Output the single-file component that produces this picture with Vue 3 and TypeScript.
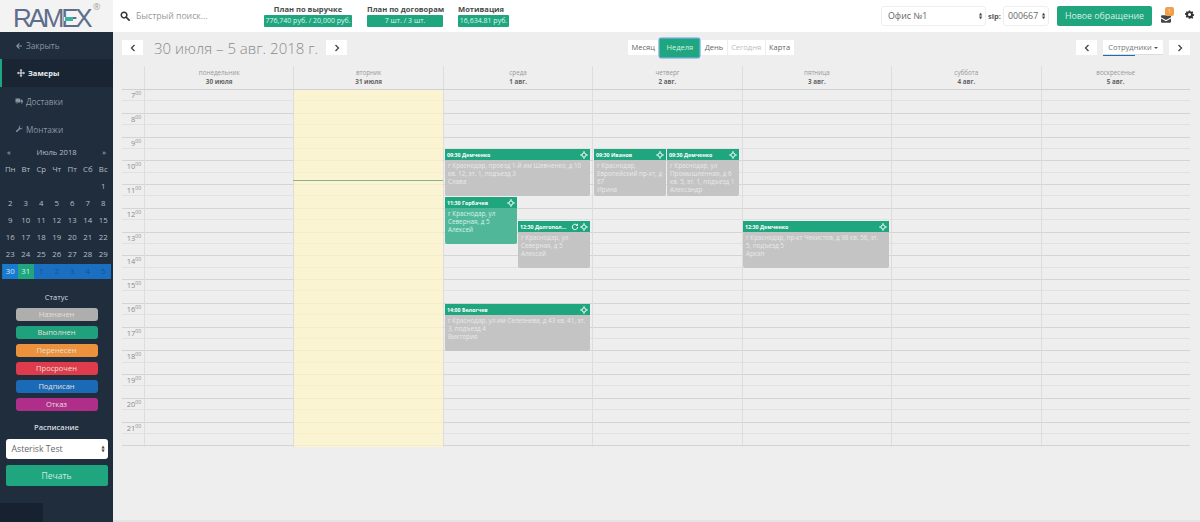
<script setup lang="ts">
interface CalEvent { time: string; name: string; text: string[]; left: number; top: number; width: number; height: number; done?: boolean; refresh?: boolean }
const nav = [
  { label: 'Закрыть', icon: 'back' },
  { label: 'Замеры', icon: 'move', active: true },
  { label: 'Доставки', icon: 'truck' },
  { label: 'Монтажи', icon: 'wrench' },
]
const weekdays = ['Пн', 'Вт', 'Ср', 'Чт', 'Пт', 'Сб', 'Вс']
const weeks: (string | number)[][] = [
  ['', '', '', '', '', '', 1],
  [2, 3, 4, 5, 6, 7, 8],
  [9, 10, 11, 12, 13, 14, 15],
  [16, 17, 18, 19, 20, 21, 22],
  [23, 24, 25, 26, 27, 28, 29],
]
const lastWeek = [30, 31, 1, 2, 3, 4, 5]
const statuses = [
  { label: 'Назначен', color: '#b4b4b4' },
  { label: 'Выполнен', color: '#1fa67f' },
  { label: 'Перенесен', color: '#f5973c' },
  { label: 'Просрочен', color: '#e63c4e' },
  { label: 'Подписан', color: '#1a6dbd' },
  { label: 'Отказ', color: '#b42f8e' },
]
const plans = [
  { title: 'План по выручке', value: '776,740 руб. / 20,000 руб.', width: 88 },
  { title: 'План по договорам', value: '7 шт. / 3 шт.', width: 76 },
  { title: 'Мотивация', value: '16,634.81 руб.', width: 51 },
]
const views = ['Месяц', 'Неделя', 'День', 'Сегодня', 'Карта']
const days = [
  ['понедельник', '30 июля'], ['вторник', '31 июля'], ['среда', '1 авг.'], ['четверг', '2 авг.'],
  ['пятница', '3 авг.'], ['суббота', '4 авг.'], ['воскресенье', '5 авг.'],
]
const hours = Array.from({ length: 15 }, (_, i) => i + 7)
const events: CalEvent[] = [
  { time: '09:30', name: 'Демченко', text: ['г Краснодар, проезд 1-й им Шевченко, д 10', 'кв. 12, эт. 1, подъезд 3', 'Слава'], left: 323, top: 59, width: 145, height: 47 },
  { time: '09:30', name: 'Иванов', text: ['г Краснодар,', 'Европейский пр-кт, д', '67', 'Ирина'], left: 472, top: 59, width: 72, height: 47 },
  { time: '09:30', name: 'Демченко', text: ['г Краснодар, ул', 'Промышленная, д 6', 'кв. 5, эт. 1, подъезд 1', 'Александр'], left: 545, top: 59, width: 72, height: 47 },
  { time: '11:30', name: 'Горбачев', text: ['г Краснодар, ул', 'Северная, д 5', 'Алексей'], left: 323, top: 107, width: 72, height: 47, done: true },
  { time: '12:30', name: 'Долгопол...', text: ['г Краснодар, ул', 'Северная, д 5', 'Алексей'], left: 396, top: 131, width: 72, height: 47, refresh: true },
  { time: '12:30', name: 'Демченко', text: ['г Краснодар, пр-кт Чекистов, д 98 кв. 56, эт.', '5, подъезд 5', 'Аркап'], left: 621, top: 131, width: 146, height: 47 },
  { time: '14:00', name: 'Белогчев', text: ['г Краснодар, ул им Селезнева, д 43 кв. 41, эт.', '3, подъезд 4', 'Виктория'], left: 323, top: 214, width: 145, height: 47 },
]
function place(e: CalEvent) {
  return { left: e.left + 'px', top: e.top + 'px', width: e.width + 'px', height: e.height + 'px' }
}
</script>

<template>
  <div class="page">
    <header class="top">
      <div class="logo">
        <span class="logo-word">RAMEX<i class="logo-dash"></i></span>
        <span class="logo-reg">®</span>
      </div>
      <div class="bar">
        <svg class="search" viewBox="0 0 16 16"><circle cx="6.5" cy="6.5" r="4.5" fill="none" stroke="#333" stroke-width="2.4"/><path d="M10 10l4.5 4.5" stroke="#333" stroke-width="2.8" stroke-linecap="round"/></svg>
        <span class="search-text">Быстрый поиск...</span>
        <div class="plans">
          <div v-for="p in plans" :key="p.title" class="plan" :style="{ width: p.width + 'px' }">
            <div class="plan-title">{{ p.title }}</div>
            <div class="plan-value">{{ p.value }}</div>
          </div>
        </div>
        <div class="bar-right">
          <div class="select office">Офис №1<span class="updown"><b>▲</b><b>▼</b></span></div>
          <span class="sip">sip:</span>
          <div class="select sipbox">000667<span class="updown"><b>▲</b><b>▼</b></span></div>
          <button class="new">Новое обращение</button>
          <div class="mail">
            <svg viewBox="0 0 16 12" width="10" height="8"><path d="M0 3l8 4.500L16 3V1.500A1.500 1.500 0 0 0 14.500 0h-13A1.500 1.500 0 0 0 0 1.500zM0 5v5.500A1.500 1.500 0 0 0 1.500 12h13a1.500 1.500 0 0 0 1.500-1.500V5l-8 4.500z" fill="#444"/></svg>
            <span class="mail-badge">1</span>
          </div>
          <svg class="gear" viewBox="0 0 24 24"><path fill="#333" fill-rule="evenodd" d="M10 1h4l.6 3.100 2 .8L19.300 3.200l2.800 2.800-1.700 2.600.9 2 3 .6v4l-3 .6-.9 2 1.700 2.600-2.800 2.800-2.700-1.700-2 .8L14 23h-4l-.6-3.100-2-.8-2.700 1.700-2.800-2.800 1.700-2.600-.9-2-3-.6v-4l3-.6.9-2L1.900 6l2.800-2.800 2.700 1.700 2-.8zM12 8a4 4 0 1 0 0 8 4 4 0 0 0 0-8z"/></svg>
        </div>
      </div>
    </header>

    <div class="body">
      <aside class="side">
        <nav class="nav">
          <div v-for="n in nav" :key="n.label" class="nav-item" :class="{ active: n.active }">
            <svg class="nav-icon" viewBox="0 0 16 16">
              <path v-if="n.icon === 'back'" d="M8 2L2 8l6 6 1.500-1.500L6.200 9.200H14V6.800H6.200l3.300-3.300z"/>
              <path v-else-if="n.icon === 'move'" d="M8 0l3 3H9v4h4V5l3 3-3 3V9H9v4h2l-3 3-3-3h2V9H3v2L0 8l3-3v2h4V3H5z"/>
              <path v-else-if="n.icon === 'truck'" d="M1 3h9v8H6a2 2 0 0 0-3.800 0H1zM11 5h2.500L16 8v3h-.6a2 2 0 0 0-3.800 0H11zM4 10.500a1.300 1.300 0 1 1 0 2.600 1.300 1.300 0 0 1 0-2.600zM13.500 10.500a1.300 1.300 0 1 1 0 2.600 1.300 1.300 0 0 1 0-2.600z"/>
              <path v-else d="M15 4.500a4 4 0 0 1-5.300 3.800L4 14a1.500 1.500 0 0 1-2-2l5.700-5.700A4 4 0 0 1 11.500 1L9 3.500 10 6l2.500 1z"/>
            </svg>
            <span>{{ n.label }}</span>
          </div>
        </nav>

        <div class="cal">
          <div class="cal-head"><span>«</span><span>Июль 2018</span><span>»</span></div>
          <div class="cal-row cal-week"><span v-for="w in weekdays" :key="w">{{ w }}</span></div>
          <div v-for="(w, i) in weeks" :key="i" class="cal-row"><span v-for="(d, j) in w" :key="j">{{ d }}</span></div>
          <div class="cal-row cal-current">
            <span v-for="d in lastWeek" :key="d" :class="{ today: d === 31, first: d === 30, other: d < 10 }">{{ d }}</span>
          </div>
        </div>

        <div class="side-title">Статус</div>
        <div class="statuses">
          <div v-for="s in statuses" :key="s.label" class="status" :style="{ background: s.color }">{{ s.label }}</div>
        </div>

        <div class="side-title schedule">Расписание</div>
        <div class="select side-select">Asterisk Test<span class="updown"><b>▲</b><b>▼</b></span></div>
        <button class="print">Печать</button>
        <div class="side-foot"></div>
      </aside>

      <main class="main">
        <div class="toolbar">
          <div class="tool-left">
            <button class="arrow"><svg viewBox="0 0 6 8"><path d="M4.500 1L1.500 4l3 3"/></svg></button>
            <h1 class="range">30 июля – 5 авг. 2018 г.</h1>
            <button class="arrow"><svg viewBox="0 0 6 8"><path d="M1.500 1l3 3-3 3"/></svg></button>
          </div>
          <div class="views">
            <button v-for="v in views" :key="v" class="view" :class="{ on: v === 'Неделя', dim: v === 'Сегодня' }">{{ v }}</button>
          </div>
          <div class="tool-right">
            <button class="arrow"><svg viewBox="0 0 6 8"><path d="M4.500 1L1.500 4l3 3"/></svg></button>
            <button class="staff">Сотрудники <i class="caret"></i></button>
            <button class="arrow"><svg viewBox="0 0 6 8"><path d="M1.500 1l3 3-3 3"/></svg></button>
          </div>
        </div>

        <div class="grid">
          <div class="grid-head">
            <div class="gutter"></div>
            <div v-for="d in days" :key="d[0]" class="day-head">
              <div>{{ d[0] }}</div>
              <strong>{{ d[1] }}</strong>
            </div>
          </div>
          <div class="grid-body">
            <div class="hours">
              <div v-for="h in hours" :key="h" class="hour">
                <div class="half"><span class="hour-label">{{ h }}<sup>00</sup></span></div>
                <div class="half"></div>
              </div>
            </div>
            <div class="columns">
              <div class="col-gutter"></div>
              <div v-for="(d, i) in days" :key="d[0]" class="col" :class="{ today: i === 1 }"></div>
            </div>
            <div class="now"></div>
            <div v-for="(e, i) in events" :key="i" class="event" :class="{ done: e.done }" :style="place(e)">
              <div class="event-head">
                <span class="event-title">{{ e.time }} {{ e.name }}</span>
                <svg v-if="e.refresh" class="ev-icon" viewBox="0 0 12 12"><path d="M10 6a4 4 0 1 1-1.300-3" fill="none" stroke="#fff" stroke-width="1.500"/><path d="M10.500 .8v3.500H7z" fill="#fff"/></svg>
                <svg class="ev-icon" viewBox="0 0 12 12"><circle cx="6" cy="6" r="3" fill="none" stroke="#fff" stroke-width="1.300"/><path d="M6 0l2 2.300H4zM6 12l2-2.300H4zM0 6l2.300-2v4zM12 6L9.700 4v4z" fill="#fff"/></svg>
              </div>
              <div class="event-body"><div v-for="t in e.text" :key="t">{{ t }}</div></div>
            </div>
          </div>
        </div>
        <div class="foot-line"></div>
      </main>
    </div>
  </div>
</template>

<style>
html, body { margin: 0; background: #eeeeee; }
</style>

<style scoped>
.page { width: 1200px; height: 522px; display: flex; flex-direction: column; overflow: hidden; font-family: "Open Sans", "DejaVu Sans", sans-serif; background: #eeeeee; }
button { font-family: inherit; border: 0; padding: 0; }

.top { height: 32px; display: flex; background: #fff; flex: none; }
.logo { width: 113px; flex: none; background: #f3f3f3; position: relative; box-sizing: border-box; padding: 5px 0 0 13px; }
.logo-word { position: relative; display: inline-block; font-family: "Liberation Sans", sans-serif; font-size: 26px; line-height: 27px; letter-spacing: -3.200px; color: #5f6d8a; }
.logo-dash { position: absolute; left: 52px; top: 12px; width: 8px; height: 3.500px; background: #35b5a0; box-shadow: -1px 0 0 #f3f3f3; }
.logo-reg { position: absolute; left: 93px; top: 0; font-size: 9px; line-height: 14px; color: #a5a5a5; }

.bar { flex: 1; display: flex; align-items: center; padding: 0 5px 0 7px; min-width: 0; }
.search { width: 10px; height: 10px; flex: none; margin-right: 6px; }
.search-text { width: 128px; flex: none; font-size: 8.700px; color: #999; }
.plans { display: flex; gap: 15px; }
.plan { text-align: center; }
.plan:last-child { text-align: left; }
.plan-title { font-size: 7.600px; font-weight: 700; color: #4a4a4a; line-height: 10px; margin-top: -1px; margin-bottom: 1px; white-space: nowrap; }
.plan-value { height: 12px; line-height: 12px; background: #1fa67f; color: #dff5ee; font-size: 7px; border-radius: 1px; white-space: nowrap; text-align: center; }
.bar-right { margin-left: auto; display: flex; align-items: center; }
.select { position: relative; background: #fff; border: 1px solid #eee; border-radius: 3px; color: #666; box-sizing: border-box; display: flex; align-items: center; }
.updown { position: absolute; right: 3px; top: 50%; transform: translateY(-50%); display: flex; flex-direction: column; color: #444; }
.updown b { font-size: 4px; line-height: 4px; font-weight: 400; }
.office { width: 105px; height: 20px; padding-left: 6px; font-size: 8.800px; }
.sip { width: 17px; text-align: center; font-size: 7.500px; font-weight: 700; color: #555; }
.sipbox { width: 46px; height: 20px; padding-left: 4px; font-size: 8.800px; }
.new { width: 95px; height: 20px; margin-left: 8px; background: #1fa67f; color: #d8f0e8; font-size: 8.800px; border-radius: 2px; }
.mail { position: relative; width: 10px; height: 8px; margin-left: 9px; margin-top: 5px; }
.mail svg { display: block; }
.mail-badge { position: absolute; left: 4px; top: -8px; width: 9px; height: 9px; background: #f0a04b; border-radius: 2px; color: #fbe2c5; font-size: 5.500px; line-height: 9px; text-align: center; }
.gear { width: 9px; height: 9px; margin: -4px 1px 0 14px; flex: none; }

.body { flex: 1; display: flex; min-height: 0; }
.side { position: relative; width: 113px; flex: none; background: #1f2d3d; color: #c6ccd3; box-sizing: border-box; display: flex; flex-direction: column; align-items: center; }
.nav { width: 100%; }
.nav-item { height: 28px; display: flex; align-items: center; gap: 3px; padding-left: 15px; font-size: 8.200px; color: #8b96a2; box-sizing: border-box; }
.nav-item:first-child { height: 27px; }
.nav-icon { width: 8px; height: 8px; fill: #8b96a2; flex: none; }
.nav-item.active { background: #1a2533; border-left: 2.500px solid #1fa67f; padding-left: 15px; color: #e9edf0; font-weight: 700; font-size: 7.500px; }
.nav-item.active .nav-icon { fill: #e9edf0; }

.cal { width: 109px; margin-top: 1.500px; font-size: 7.800px; color: #b6bec7; }
.cal-head { height: 15px; display: flex; justify-content: space-between; align-items: center; padding: 0 5px; font-size: 7.600px; box-sizing: border-box; }
.cal-row { height: 17px; display: grid; grid-template-columns: repeat(7, 15.500px); padding-left: .5px; align-items: center; text-align: center; }
.cal-week { margin-top: 1px; }
.cal-current { height: 15px; margin-top: 1px; background: #1a6fc0; }
.cal-current span { line-height: 15px; }
.cal-current .first { background: #1a7ad0; color: #d7e5f3; }
.cal-current .today { background: #1fa67f; color: #d8f0e8; }
.cal-current .other { color: #0f5596; }

.side-title { margin-top: 12px; font-size: 7.500px; line-height: 13px; color: #d5dade; }
.statuses { width: 82px; margin-top: 4px; display: flex; flex-direction: column; gap: 5.200px; }
.status { height: 13px; line-height: 13px; border-radius: 3px; font-size: 7.500px; text-align: center; color: #f0e4de; opacity: .96; }
.schedule { margin-top: 10px; font-weight: 600; }
.side-select { width: 102px; height: 20px; margin-top: 5px; padding-left: 6px; font-size: 8.700px; color: #666; border: 0; }
.print { width: 102px; height: 21px; margin-top: 6px; background: #1fa67f; color: #d0ece3; font-size: 8.600px; border-radius: 2px; }
.side-foot { position: absolute; left: 0; bottom: 0; width: 43px; height: 19px; background: #172230; }

.main { flex: 1; min-width: 0; padding: 0 10px 0 9px; display: flex; flex-direction: column; position: relative; }
.toolbar { height: 34px; display: flex; align-items: center; flex: none; box-sizing: border-box; padding-bottom: 3px; }
.tool-left { display: flex; align-items: center; width: 506px; flex: none; }
.tool-right { display: flex; align-items: center; gap: 6px; margin-left: auto; }
.arrow { width: 21px; height: 15px; background: #fff; display: flex; align-items: center; justify-content: center; }
.arrow svg { width: 6px; height: 8px; fill: none; stroke: #444; stroke-width: 1.300; }
.range { margin: 0 0 0 11px; width: 172px; font-size: 15px; font-weight: 300; color: #8a8a8a; white-space: nowrap; }
.views { display: flex; align-items: center; gap: 1px; }
.view { height: 15px; padding: 0 3.500px; background: #fff; color: #666; font-size: 7.500px; line-height: 15px; }
.view.on { height: 18px; background: #1fa67f; color: #d8f0e8; margin: 0 1px; padding: 0 6px; box-shadow: 0 0 0 1.500px #5aa9cf; border-radius: 1px; }
.view.dim { color: #bbb; }
.staff { position: relative; width: 60px; height: 15px; background: #fff; color: #777; font-size: 7.500px; line-height: 15px; box-shadow: inset 0 -1px 0 #ddd; white-space: nowrap; }
.staff::after { content: ""; position: absolute; left: 0; bottom: -1px; width: 32px; height: 1.500px; background: #1a6dbd; }
.caret { display: inline-block; width: 0; height: 0; border: 2.500px solid transparent; border-top-color: #555; border-bottom: 0; vertical-align: middle; }

.grid { flex: none; width: 1068px; }
.grid-head { height: 23px; display: flex; border-bottom: 1px solid #d0d0d0; }
.gutter { width: 22px; flex: none; }
.day-head { flex: 1; border-left: 1px solid #ddd; text-align: center; font-size: 6.300px; line-height: 8.500px; color: #999; padding-top: 3px; box-sizing: border-box; }
.day-head strong { color: #666; font-weight: 700; }
.grid-body { position: relative; height: 357px; }
.hour { height: 23.760px; box-sizing: border-box; border-bottom: 1px solid #d4d4d4; display: flex; flex-direction: column; }
.half { flex: 1; border-bottom: 1px solid transparent; position: relative; }
.half:first-child { border-bottom-color: #e1e1e1; }
.hour-label { position: absolute; right: 1049px; top: 0; font-size: 7.500px; line-height: 10px; color: #8a8a8a; white-space: nowrap; }
.hour-label sup { font-size: 5px; line-height: 0; vertical-align: 3px; }
.columns { position: absolute; inset: 0; display: flex; pointer-events: none; }
.col-gutter { width: 22px; flex: none; }
.col { flex: 1; border-left: 1px solid #ddd; box-sizing: border-box; }
.col.today { background: rgba(255, 246, 200, .7); }
.now { position: absolute; left: 171px; width: 150px; top: 90px; height: 1px; background: #8fae8d; }

.event { position: absolute; background: #c4c4c4; border-radius: 0 0 2px 2px; overflow: hidden; color: #e9e9e9; }
.event.done { background: #50b899; color: #d9f2ea; }
.event-head { height: 11px; background: #1fa67f; display: flex; align-items: center; padding: 0 2px; gap: 1px; color: #fff; }
.event-title { flex: 1; min-width: 0; font-size: 5.300px; font-weight: 700; white-space: nowrap; }
.ev-icon { width: 8px; height: 8px; flex: none; }
.event-body { padding: 1.500px 3px 0; font-size: 6.300px; line-height: 8.200px; white-space: nowrap; }
.foot-line { position: absolute; left: 0; right: 0; bottom: 0; height: 2px; background: #e3e3e3; }
</style>
